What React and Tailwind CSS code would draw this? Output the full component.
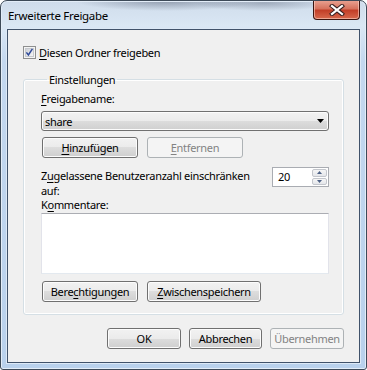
import React from 'react';

const btnOn =
  'border-[#707070] bg-[linear-gradient(#f2f2f2,#ebebeb_50%,#dddddd_50%,#cfcfcf)] shadow-[inset_0_0_0_1px_#fcfcfc] text-black';
const btnOff = 'border-[#adb2b5] bg-[#f4f4f4] text-[#838383]';

function Btn({ children, disabled, className = '' }) {
  return (
    <button
      disabled={disabled}
      className={`${disabled ? btnOff : btnOn} h-[21px] rounded-[3px] border flex items-center justify-center leading-[13px] ${className}`}
    >
      {children}
    </button>
  );
}

function U({ children }) {
  return <span className="underline underline-offset-[2px] decoration-1">{children}</span>;
}

function CheckBox() {
  return (
    <svg width="13" height="13" viewBox="0 0 13 13" className="shrink-0">
      <defs>
        <linearGradient id="cbg" x1="0" y1="0" x2="1" y2="1">
          <stop offset="0" stopColor="#cbcfd5" />
          <stop offset="1" stopColor="#f7f7f7" />
        </linearGradient>
      </defs>
      <rect x="0.5" y="0.5" width="12" height="12" fill="#f4f4f4" stroke="#8e8f8f" />
      <rect x="2.5" y="2.5" width="8" height="8" fill="url(#cbg)" stroke="#c6c9ce" />
      <path d="M3.4 6.4 L5.4 9 L9.4 2.8" fill="none" stroke="#2f4a9a" strokeWidth="1.5" />
    </svg>
  );
}

function CloseButton() {
  return (
    <div className="ml-auto mr-[6px] -mt-px w-[47px] h-[20px] rounded-b-[4px] border border-t-0 border-[#3b1510] bg-[linear-gradient(#eaa595,#d6735e_45%,#c23f28_55%,#d8694d)] shadow-[inset_0_0_0_1px_rgba(255,220,210,0.55)] flex items-center justify-center">
      <svg width="16" height="12" viewBox="0 0 16 12">
        <path d="M3 2 L13 10 M13 2 L3 10" stroke="#3a2020" strokeWidth="4.2" strokeLinecap="square" />
        <path d="M3 2 L13 10 M13 2 L3 10" stroke="#ffffff" strokeWidth="2.2" strokeLinecap="square" />
      </svg>
    </div>
  );
}

export default function App() {
  return (
    <div className="w-[367px] h-[370px] flex flex-col border border-[#3d4a58] rounded-t-[7px] rounded-b-[3px] bg-[radial-gradient(ellipse_90px_10px_at_45%_0%,rgba(70,80,100,0.45),transparent),radial-gradient(ellipse_70px_8px_at_72%_2px,rgba(70,80,100,0.35),transparent),linear-gradient(#cfdceb,#dae7f4_25px,#c4d8ef_60px,#b9d1ec)] shadow-[inset_0_0_0_1px_#e3edf8] text-[11px] tracking-[-0.3px] text-black font-['Noto_Sans','Liberation_Sans',sans-serif] overflow-hidden">
      {/* Title bar */}
      <div className="h-[28px] flex items-start shrink-0">
        <div className="pl-[7px] pt-[7px] leading-[15px] text-[11.5px]">Erweiterte Freigabe</div>
        <CloseButton />
      </div>

      {/* Client area */}
      <div className="mx-[6px] h-[334px] border border-[#40526a] bg-[#f0f0f0] shadow-[0_0_0_1px_#dde9f6] flex flex-col pl-[15px] pr-[15px]">
        <div className="mt-[16px] h-[13px] flex items-center gap-[3px]">
          <CheckBox />
          <span className="leading-[15px]">
            <U>D</U>iesen Ordner freigeben
          </span>
        </div>

        <fieldset className="mt-[13px] border border-[#d5dfe5] rounded-[3px] shadow-[inset_0_0_0_1px_#ffffff] pl-[17px] pr-[14px] pt-[4px] pb-[12px]">
          <legend className="ml-[6px] px-[2px] leading-[15px]">Einstellungen</legend>

          <div className="leading-[15px]">
            <U>F</U>reigabename:
          </div>

          <div className={`mt-[5px] h-[20px] rounded-[3px] border flex items-center pl-[3px] pr-[4px] ${btnOn}`}>
            <span className="flex-1 leading-[15px]">share</span>
            <svg width="7" height="4" viewBox="0 0 7 4">
              <path d="M0 0 H7 L3.5 4 Z" fill="#000" />
            </svg>
          </div>

          <div className="mt-[6px] ml-px flex gap-[9px]">
            <Btn className="w-[96px]">
              <U>H</U>inzufügen
            </Btn>
            <Btn disabled className="w-[96px]">
              <U>E</U>ntfernen
            </Btn>
          </div>

          <div className="mt-[9px] flex items-start justify-between">
            <div className="leading-[15px] pt-px">
              Z<U>u</U>gelassene Benutzeranzahl einschränken
              <br />
              auf:
            </div>
            <div className="w-[57px] h-[20px] border border-[#a9acb2] bg-white flex">
              <span className="flex-1 pl-[5px] leading-[18px]">20</span>
              <div className="flex flex-col gap-px p-px">
                <div className="w-[15px] flex-1 rounded-[2px] border border-[#c3c6cc] bg-[linear-gradient(#f6f6f6,#e4e6ea)] flex items-center justify-center">
                  <svg width="5" height="3" viewBox="0 0 5 3">
                    <path d="M0 3 L2.5 0 L5 3 Z" fill="#4d6185" />
                  </svg>
                </div>
                <div className="w-[15px] flex-1 rounded-[2px] border border-[#c3c6cc] bg-[linear-gradient(#f6f6f6,#e4e6ea)] flex items-center justify-center">
                  <svg width="5" height="3" viewBox="0 0 5 3">
                    <path d="M0 0 L5 0 L2.5 3 Z" fill="#4d6185" />
                  </svg>
                </div>
              </div>
            </div>
          </div>

          <div className="-mt-px leading-[15px]">
            K<U>o</U>mmentare:
          </div>

          <div className="mt-px h-[61px] bg-white border border-[#e2e3ea] border-t-[#abadb3] border-b-[#e3e9ef]" />

          <div className="mt-[7px] ml-px flex gap-[9px]">
            <Btn className="w-[96px]">
              Bere<U>c</U>htigungen
            </Btn>
            <Btn className="w-[114px]">
              <U>Z</U>wischenspeichern
            </Btn>
          </div>
        </fieldset>

        <div className="mt-[13px] flex justify-end gap-[8px]">
          <Btn className="w-[74px]">OK</Btn>
          <Btn className="w-[73px]">Abbrechen</Btn>
          <Btn disabled className="w-[74px]">
            Übernehmen
          </Btn>
        </div>
      </div>
    </div>
  );
}
